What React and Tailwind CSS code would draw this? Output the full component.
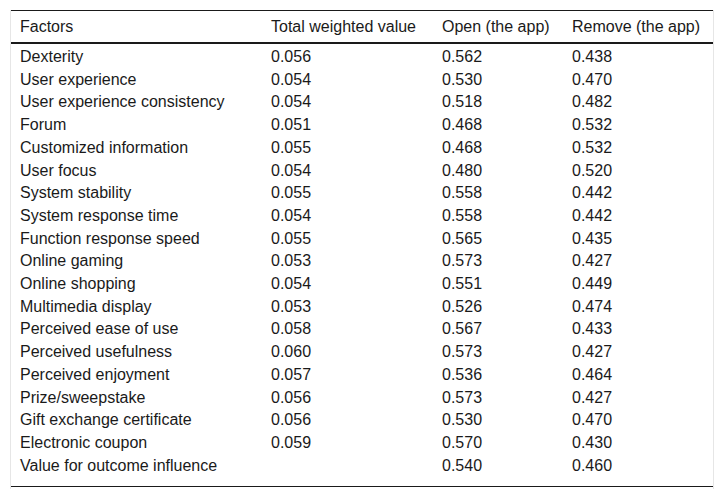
const rows = [
  ['Dexterity', '0.056', '0.562', '0.438'],
  ['User experience', '0.054', '0.530', '0.470'],
  ['User experience consistency', '0.054', '0.518', '0.482'],
  ['Forum', '0.051', '0.468', '0.532'],
  ['Customized information', '0.055', '0.468', '0.532'],
  ['User focus', '0.054', '0.480', '0.520'],
  ['System stability', '0.055', '0.558', '0.442'],
  ['System response time', '0.054', '0.558', '0.442'],
  ['Function response speed', '0.055', '0.565', '0.435'],
  ['Online gaming', '0.053', '0.573', '0.427'],
  ['Online shopping', '0.054', '0.551', '0.449'],
  ['Multimedia display', '0.053', '0.526', '0.474'],
  ['Perceived ease of use', '0.058', '0.567', '0.433'],
  ['Perceived usefulness', '0.060', '0.573', '0.427'],
  ['Perceived enjoyment', '0.057', '0.536', '0.464'],
  ['Prize/sweepstake', '0.056', '0.573', '0.427'],
  ['Gift exchange certificate', '0.056', '0.530', '0.470'],
  ['Electronic coupon', '0.059', '0.570', '0.430'],
  ['Value for outcome influence', '', '0.540', '0.460'],
]

const widths = ['w-[251px]', 'w-[171px]', 'w-[130px]', 'w-[150px]']

const App = () => {
  return (
    <div className="bg-white w-[724px] h-[499px] pt-[10px] font-['Liberation_Sans',Arial,sans-serif] text-[16px] text-[#1a1a1a]">
      <div className="ml-[10px] w-[704px] border-x border-[#e6e6e6] pb-[2px]">
        <table className="w-[702px] table-fixed border-collapse">
          <thead>
            <tr className="border-t border-[#1a1a1a] border-b-2">
              {['Factors', 'Total weighted value', 'Open (the app)', 'Remove (the app)'].map((h, i) => (
                <th key={h} className={`${widths[i]} text-left font-normal pl-[9px] pt-px pb-0 leading-[30px] whitespace-nowrap`}>
                  {h}
                </th>
              ))}
            </tr>
          </thead>
          <tbody className="border-b border-[#1a1a1a]">
            {rows.map((r, idx) => {
              const first = idx === 0
              const last = idx === rows.length - 1
              return (
                <tr key={r[0]}>
                  {r.map((c, i) => (
                    <td
                      key={i}
                      className={`align-top pl-[9px] leading-[22.7px] whitespace-nowrap ${first ? 'pt-[2px]' : 'pt-0'} ${last ? 'pb-[9px]' : 'pb-0'}`}
                    >
                      {c}
                    </td>
                  ))}
                </tr>
              )
            })}
          </tbody>
        </table>
      </div>
    </div>
  )
}

export default App
